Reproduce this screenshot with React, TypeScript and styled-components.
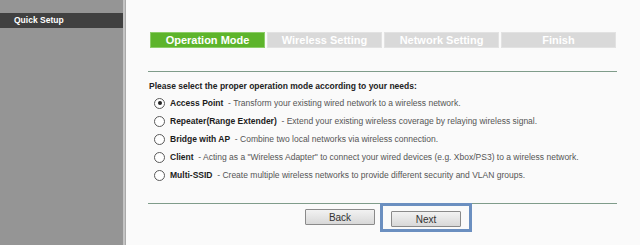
import * as React from 'react';
import styled, { createGlobalStyle } from 'styled-components';

const GlobalStyle = createGlobalStyle`
  html, body {
    margin: 0;
    padding: 0;
    background: #fafafa;
  }
  body {
    font-family: "Liberation Sans", Arial, sans-serif;
  }
`;

type Mode = {
  id: string;
  name: string;
  desc: string;
};

const steps = ['Operation Mode', 'Wireless Setting', 'Network Setting', 'Finish'];

const modes: Mode[] = [
  { id: 'ap', name: 'Access Point', desc: 'Transform your existing wired network to a wireless network.' },
  { id: 'repeater', name: 'Repeater(Range Extender)', desc: 'Extend your existing wireless coverage by relaying wireless signal.' },
  { id: 'bridge', name: 'Bridge with AP', desc: 'Combine two local networks via wireless connection.' },
  { id: 'client', name: 'Client', desc: 'Acting as a "Wireless Adapter" to connect your wired devices (e.g. Xbox/PS3) to a wireless network.' },
  { id: 'multi', name: 'Multi-SSID', desc: 'Create multiple wireless networks to provide different security and VLAN groups.' },
];

export default function App() {
  const [mode, setMode] = React.useState('ap');

  return (
    <Page>
      <GlobalStyle />
      <Sidebar>
        <MenuItem>Quick Setup</MenuItem>
      </Sidebar>

      <Main>
        <Steps>
          {steps.map((s, i) => (
            <Step key={s} active={i === 0}>{s}</Step>
          ))}
        </Steps>

        <Body>
          <Intro>Please select the proper operation mode according to your needs:</Intro>
          <Options>
            {modes.map((m) => (
              <Option key={m.id} onClick={() => setMode(m.id)}>
                <Radio checked={mode === m.id} />
                <Name>{m.name}</Name>
                <Desc>&nbsp; - {m.desc}</Desc>
              </Option>
            ))}
          </Options>
        </Body>

        <Footer>
          <Button>Back</Button>
          <FocusRing>
            <Button>Next</Button>
          </FocusRing>
        </Footer>
      </Main>
    </Page>
  );
}

const Page = styled.div`
  display: flex;
  width: 640px;
  height: 245px;
  overflow: hidden;
`;

const Sidebar = styled.div`
  width: 123px;
  flex-shrink: 0;
  background: #959595;
  padding-top: 13px;
  border-right: 2px solid #c4c4c4;
  box-shadow: 1px 0 0 #a9a9a9;
  margin-right: 1px;
`;

const MenuItem = styled.div`
  height: 15px;
  line-height: 15px;
  background: #404040;
  color: #ffffff;
  font-size: 8.5px;
  font-weight: bold;
  padding-left: 14px;
`;

const Main = styled.div`
  background: #fafafa;
  padding-left: 22px;
  width: 469px;
`;

const Steps = styled.div`
  display: flex;
  gap: 2px;
  margin: 32px 0 0 2px;
`;

const Step = styled.div<{ active?: boolean }>`
  width: 113px;
  height: 14px;
  line-height: 14px;
  text-align: center;
  font-size: 11px;
  font-weight: bold;
  color: #ffffff;
  background: ${(p) => (p.active ? '#5db42b' : '#d9d9d9')};
  border: 1px solid ${(p) => (p.active ? '#8ccd68' : '#e2e2e2')};
`;

const Body = styled.div`
  margin-top: 23px;
  border-top: 1px solid #7f9c8a;
  padding-top: 9px;
  height: 122px;
`;

const Intro = styled.div`
  font-size: 8.5px;
  font-weight: bold;
  color: #222222;
  margin-left: 1px;
`;

const Options = styled.div`
  margin-top: 6px;
  display: flex;
  flex-direction: column;
  gap: 6px;
`;

const Option = styled.div`
  display: flex;
  align-items: center;
  height: 12px;
  padding-left: 6px;
  font-size: 8.5px;
  cursor: pointer;
`;

const Radio = styled.span<{ checked?: boolean }>`
  width: 11px;
  height: 11px;
  box-sizing: border-box;
  border: 1px solid #5a5a5a;
  border-radius: 50%;
  background: #ffffff;
  margin-right: 5px;
  position: relative;
  flex-shrink: 0;

  &::after {
    content: '';
    display: ${(p) => (p.checked ? 'block' : 'none')};
    position: absolute;
    left: 2.5px;
    top: 2.5px;
    width: 4px;
    height: 4px;
    border-radius: 50%;
    background: #222222;
  }
`;

const Name = styled.span`
  font-weight: bold;
  color: #1c1c1c;
`;

const Desc = styled.span`
  color: #555555;
  white-space: nowrap;
`;

const Footer = styled.div`
  border-top: 1px solid #7f9c8a;
  display: flex;
  justify-content: center;
  align-items: flex-start;
  gap: 5px;
  padding-left: 12px;
`;

const Button = styled.button`
  width: 70px;
  height: 16px;
  margin-top: 5px;
  padding: 0;
  font-family: "Liberation Sans", Arial, sans-serif;
  font-size: 10px;
  color: #333333;
  background: linear-gradient(#f2f2f2, #d8d8d8);
  border: 1px solid #8a8a8a;
  border-radius: 1px;
`;

const FocusRing = styled.div`
  border: 3px solid #6b8fc0;
  margin-top: -1px;
  padding: 0 8px 5px 8px;
  box-sizing: border-box;
  height: 29px;
`;
